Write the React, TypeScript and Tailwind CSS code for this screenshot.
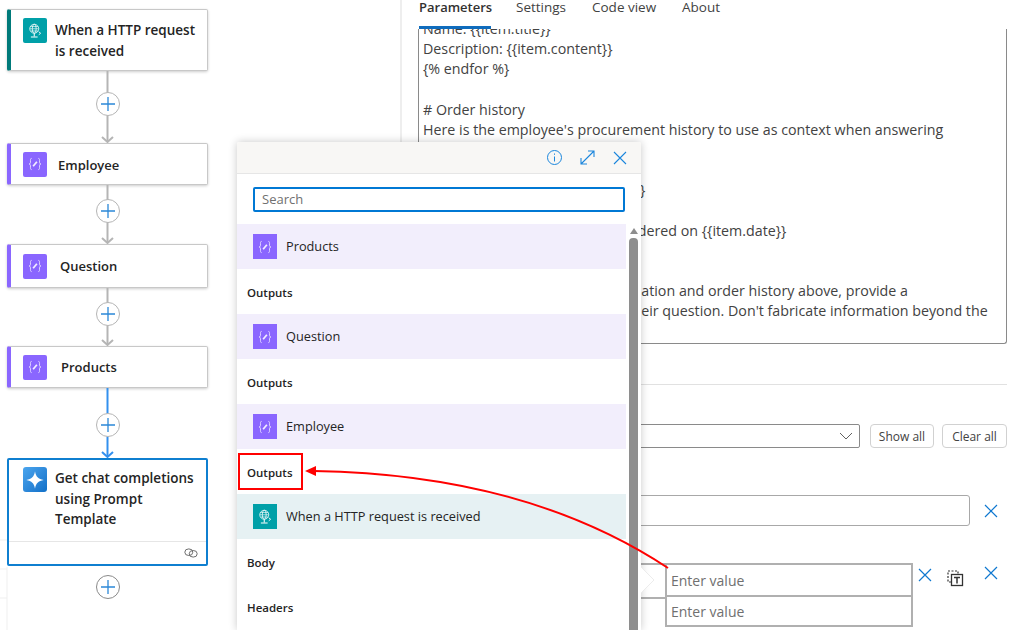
import React from 'react'

const FONT = "font-['Open_Sans',sans-serif]"

const promptLines = [
  'Name: {{item.title}}',
  'Description: {{item.content}}',
  '{% endfor %}',
  '\u00a0',
  '# Order history',
  "Here is the employee's procurement history to use as context when answering",
  'their question.',
  '{% for item in order_history %}',
  '{{item.title}} qty: {{item.quantity}}',
  '\u00a0',
  'Product: {{item.title}} was last ordered on {{item.date}}',
  '{% endfor %}',
  '\u00a0',
  'Use the provided product information and order history above, provide a',
  'respond to the user to answer their question. Don\'t fabricate information beyond the',
]

function HttpIcon() {
  return (
    <svg viewBox="0 0 24 24" className="w-[18px] h-[18px]" fill="none" stroke="#fff" strokeWidth="1">
      <circle cx="11" cy="9" r="6" />
      <ellipse cx="11" cy="9" rx="2.6" ry="6" />
      <path d="M5 9h12M6 6h10M6 12h10" strokeWidth="0.8" />
      <path d="M11 15v4M6.5 20h9" strokeWidth="1.4" />
      <path d="M17 13l2.5 2-2.5 2" strokeWidth="1.2" />
    </svg>
  )
}

function VarIcon() {
  return (
    <svg viewBox="0 0 24 24" className="w-[18px] h-[18px]" fill="none" stroke="#e4dcff" strokeWidth="1.2">
      <path d="M7.5 4.5C5.5 4.5 6 7 6 9.5 6 11 5.5 12 4 12c1.5 0 2 1 2 2.5 0 2.5-.5 5 1.5 5" />
      <path d="M16.5 4.5c2 0 1.5 2.5 1.500 5 0 1.500.5 2.500 2 2.500-1.500 0-2 1-2 2.500 0 2.500.5 5-1.500 5" />
      <path d="M9.500 15l5-6" strokeWidth="2.4" stroke="#f3efff" />
    </svg>
  )
}

function SparkIcon() {
  return (
    <div className="w-[24px] h-[25px] rounded-[3px] bg-gradient-to-br from-[#4aa5ee] to-[#0f70c8] flex items-center justify-center">
      <svg viewBox="0 0 24 24" className="w-[22px] h-[22px]" fill="#fff">
        <path d="M12 2.500C13 8.500 15.500 11 21.500 12 15.500 13 13 15.500 12 21.500 11 15.500 8.500 13 2.500 12 8.500 11 11 8.500 12 2.500z" />
      </svg>
    </div>
  )
}

function Tile({ kind }: { kind: 'http' | 'var' }) {
  return (
    <div
      className={
        'w-[24px] h-[25px] shrink-0 flex items-center justify-center rounded-[2px] ' +
        (kind === 'http' ? 'bg-[#00a0a8]' : 'bg-[#8a66ff]')
      }
    >
      {kind === 'http' ? <HttpIcon /> : <VarIcon />}
    </div>
  )
}

function VarCard({ title, titleClass, heightClass }: { title: string; titleClass: string; heightClass: string }) {
  return (
    <div className={'w-[201px] flex items-center bg-white border border-[#c8c8c8] border-l-[4px] border-l-[#8a66ff] rounded-[2px] shadow-[0_1px_3px_rgba(0,0,0,0.2)] pl-[12px] ' + heightClass}>
      <Tile kind="var" />
      <span className={'text-[13px] font-semibold text-[#242424] ' + titleClass}>{title}</span>
    </div>
  )
}

function Connector({ height, top, active }: { height: number; top: string; active?: boolean }) {
  const line = active ? '#3390ee' : '#b5b5b5'
  return (
    <div className="relative w-[201px] flex justify-center" style={{ height }}>
      <svg className="absolute inset-0" width="201" height={height} fill="none" stroke={line} strokeWidth="2">
        <path d={`M100.500 0V${height - 1}`} />
        <path d={`M95 ${height - 6}l5.500 5 5.500-5`} />
      </svg>
      <div className={'absolute left-[88.500px] w-[24px] h-[24px] ' + top}>
        <PlusButton />
      </div>
    </div>
  )
}

function PlusButton({ dark }: { dark?: boolean }) {
  return (
    <div
      className={
        'w-[24px] h-[24px] rounded-full bg-white border flex items-center justify-center ' +
        (dark ? 'border-[#8a8a8a]' : 'border-[#b5b5b5]')
      }
    >
      <svg width="14" height="14" fill="none" stroke="#2b88d8" strokeWidth="1.300">
        <path d="M7 0v14M0 7h14" />
      </svg>
    </div>
  )
}

function Designer() {
  return (
    <div className="w-[400px] shrink-0 pl-[7px] pt-[9px] flex flex-col items-start">
      <div className="w-[201px] h-[62px] flex items-start bg-white border border-[#c8c8c8] border-l-[4px] border-l-[#007a7a] rounded-[2px] shadow-[0_1px_3px_rgba(0,0,0,0.2)] pl-[12px] pt-[8px]">
        <Tile kind="http" />
        <span className="ml-[8px] mt-[2px] w-[148px] text-[13.500px] leading-[21px] font-semibold text-[#242424]">
          When a HTTP request is received
        </span>
      </div>
      <Connector height={72} top="top-[21px]" />
      <VarCard title="Employee" titleClass="ml-[11px] mt-[3px]" heightClass="h-[42px]" />
      <Connector height={59} top="top-[14px]" />
      <VarCard title="Question" titleClass="ml-[13px] mt-[2px]" heightClass="h-[44px]" />
      <Connector height={58} top="top-[14px]" />
      <VarCard title="Products" titleClass="ml-[14px] mt-[2px]" heightClass="h-[42px]" />
      <Connector height={70} top="top-[25px]" active />
      <div className="w-[201px] h-[108px] flex flex-col bg-white border-2 border-[#0f7fd0] rounded-[2px]">
        <div className="h-[81px] flex items-start pl-[14px] pt-[7px]">
          <SparkIcon />
          <span className="ml-[8px] mt-[1px] w-[146px] text-[13.500px] leading-[20.500px] font-semibold text-[#242424]">
            Get chat completions using Prompt Template
          </span>
        </div>
        <div className="flex-1 border-t border-[#e6e6e6] flex items-center justify-end pr-[8px]">
          <svg width="14" height="10" fill="none" stroke="#6e6e6e" strokeWidth="1">
            <ellipse cx="4.800" cy="4.200" rx="4" ry="3.300" />
            <ellipse cx="9.200" cy="5.800" rx="4" ry="3.300" />
          </svg>
        </div>
      </div>
      <div className="w-[201px] flex justify-center mt-[9px]">
        <PlusButton dark />
      </div>
    </div>
  )
}

function DeleteX() {
  return (
    <svg width="14" height="14" fill="none" stroke="#0f78d0" strokeWidth="1.200">
      <path d="M1 1l12 12M13 1L1 13" />
    </svg>
  )
}

function SidePanel() {
  return (
    <div className="relative flex-1 min-w-0 border-l-2 border-[#eeeeee] pl-[16px] pr-[3px] flex flex-col text-[#424242]">
      <div className="h-[30px] flex items-start shrink-0 pl-[1px] text-[13.500px] leading-[15px]">
        <span className="w-[97px] text-[13px] font-semibold text-[#323130]">Parameters</span>
        <span className="w-[76px]">Settings</span>
        <span className="w-[90px]">Code view</span>
        <span>About</span>
      </div>
      <div className="relative h-[315px] shrink-0 overflow-hidden border-x border-b border-[#8a8a8a] rounded-b-[3px] pl-[4px] text-[14.250px] leading-[20.150px] whitespace-nowrap -mt-[1px]">
        <div className="-mt-[10px]">
          {promptLines.map((line, i) => (
            <div key={i}>{line}</div>
          ))}
        </div>
      </div>
      <div className="absolute left-[17px] top-[26px] w-[72px] h-[3px] bg-[#0f6cbd]" />
      <div className="border-t border-[#e1e1e1] mt-[40px] shrink-0" />
      <div className="flex items-center mt-[39px] shrink-0">
        <div className="w-[442px] h-[24px] border border-[#8a8a8a] rounded-[2px] flex items-center justify-end pr-[6px]">
          <svg width="14" height="8" fill="none" stroke="#616161" strokeWidth="1">
            <path d="M1 1l6 6 6-6" />
          </svg>
        </div>
        <button className="ml-[10px] w-[64px] h-[24px] pt-[1px] border border-[#d1d1d1] rounded-[4px] text-[12px] text-[#424242]">Show all</button>
        <button className="ml-[8px] w-[65px] h-[24px] pt-[1px] border border-[#d1d1d1] rounded-[4px] text-[12px] text-[#424242]">Clear all</button>
      </div>
      <div className="flex items-center mt-[47px] shrink-0">
        <div className="w-[552px] h-[31px] border border-[#a8a8a8] rounded-[3px]" />
        <div className="ml-[14px]"><DeleteX /></div>
      </div>
      <div className="flex items-start mt-[37px] shrink-0">
        <div className="w-[495px] shrink-0 grid grid-cols-[247px_248px]">
          <div className="h-[34px] border-t-2 border-[#b0b0b0]" />
          <div className="h-[34px] border-2 border-[#b0b0b0] pl-[4px] text-[14px] leading-[31px] text-[#707070]">Enter value</div>
          <div className="h-[30px] border-t-2 border-[#b0b0b0]" />
          <div className="h-[30px] border-2 border-t-0 border-[#b0b0b0] pl-[4px] text-[14px] leading-[30px] text-[#707070]">Enter value</div>
        </div>
        <div className="ml-[5px] mt-[5px]"><DeleteX /></div>
        <svg className="ml-[14px] mt-[6px]" width="18" height="18" fill="none" stroke="#333">
          <path d="M5 13H2V2h10v3" strokeDasharray="2 1.500" strokeWidth="1.200" />
          <rect x="5.500" y="5.500" width="11" height="11" strokeWidth="1.300" />
          <path d="M8 8.500h6M11 8.500v6" strokeWidth="1.500" />
        </svg>
        <div className="ml-[20px] mt-[3px]"><DeleteX /></div>
      </div>
    </div>
  )
}

function PickerRow({ title, kind }: { title: string; kind: 'http' | 'var' }) {
  return (
    <div
      className={
        'h-[45px] flex items-center pl-[16px] ' +
        (kind === 'http' ? 'bg-[#e6f1f3]' : 'bg-[#f2eefc]')
      }
    >
      <div className="[&>div]:rounded-none"><Tile kind={kind} /></div>
      <span className="ml-[9px] text-[12.750px] text-[#242424]">{title}</span>
    </div>
  )
}

function PickerLabel({ text }: { text: string }) {
  return <div className="h-[45px] flex items-center pl-[10px] pt-[2px] text-[11.500px] font-semibold text-[#242424]">{text}</div>
}

function TokenPicker() {
  return (
    <div className="absolute left-[237px] top-[142px] w-[404px] h-[488px] bg-white rounded-t-[2px] shadow-[0_0_8px_rgba(0,0,0,0.22)] flex flex-col overflow-hidden">
      <div className="h-[32px] shrink-0 bg-[#f8f7f5] border-b border-[#e6e6e6] flex items-center justify-end pr-[14px] gap-[18px]">
        <svg width="15" height="15" fill="none" stroke="#1b86dc" strokeWidth="1">
          <circle cx="7.500" cy="7.500" r="7" />
          <path d="M7.500 6.500v5M7.500 3.500v1.300" />
        </svg>
        <svg width="15" height="15" fill="none" stroke="#1b86dc" strokeWidth="1.100">
          <path d="M1 14L14 1M8 1h6v6M1 8v6h6" />
        </svg>
        <svg width="14" height="14" fill="none" stroke="#1b86dc" strokeWidth="1.100">
          <path d="M1 1l12 12M13 1L1 13" />
        </svg>
      </div>
      <div className="shrink-0 px-[16px] pt-[13px] pb-[12px]">
        <div className="h-[25px] border-2 border-[#0078d4] rounded-[2px] pl-[7px] pr-[2px] text-[13px] leading-[21px] text-[#707070]">Search</div>
      </div>
      <div className="flex-1 min-h-0 flex">
        <div className="w-[389px] shrink-0">
          <PickerRow title="Products" kind="var" />
          <PickerLabel text="Outputs" />
          <PickerRow title="Question" kind="var" />
          <PickerLabel text="Outputs" />
          <PickerRow title="Employee" kind="var" />
          <PickerLabel text="Outputs" />
          <PickerRow title="When a HTTP request is received" kind="http" />
          <PickerLabel text="Body" />
          <PickerLabel text="Headers" />
        </div>
        <div className="ml-[3px] w-[9px] flex flex-col items-center pt-[4px]">
          <div className="w-0 h-0 border-x-[4.500px] border-x-transparent border-b-[6px] border-b-[#8e8e8e]" />
          <div className="mt-[4px] w-[9px] flex-1 bg-[#8e8e8e] rounded-t-[4px]" />
        </div>
      </div>
    </div>
  )
}

export default function App() {
  return (
    <div className={'relative w-[1010px] h-[630px] overflow-hidden bg-white flex ' + FONT}>
      <Designer />
      <SidePanel />
      <TokenPicker />
      {/* callout box and arrow drawn on top of the screenshot */}
      <div className="absolute left-[238px] top-[453px] w-[65px] h-[37px] border-2 border-[#ff0000]" />
      <svg className="absolute inset-0 pointer-events-none" width="1010" height="630" fill="none">
        <path d="M0 540h7M0 569h7M0 598h7M7 567v63" stroke="#efefef" />
        <path d="M641 567l13 13-13 13" stroke="#ececec" fill="#fff" />
        <path d="M668 568C565 500 440 473 314 471" stroke="#ff0000" strokeWidth="2" />
        <path d="M305 471l11-5v10z" fill="#ff0000" />
      </svg>
    </div>
  )
}
